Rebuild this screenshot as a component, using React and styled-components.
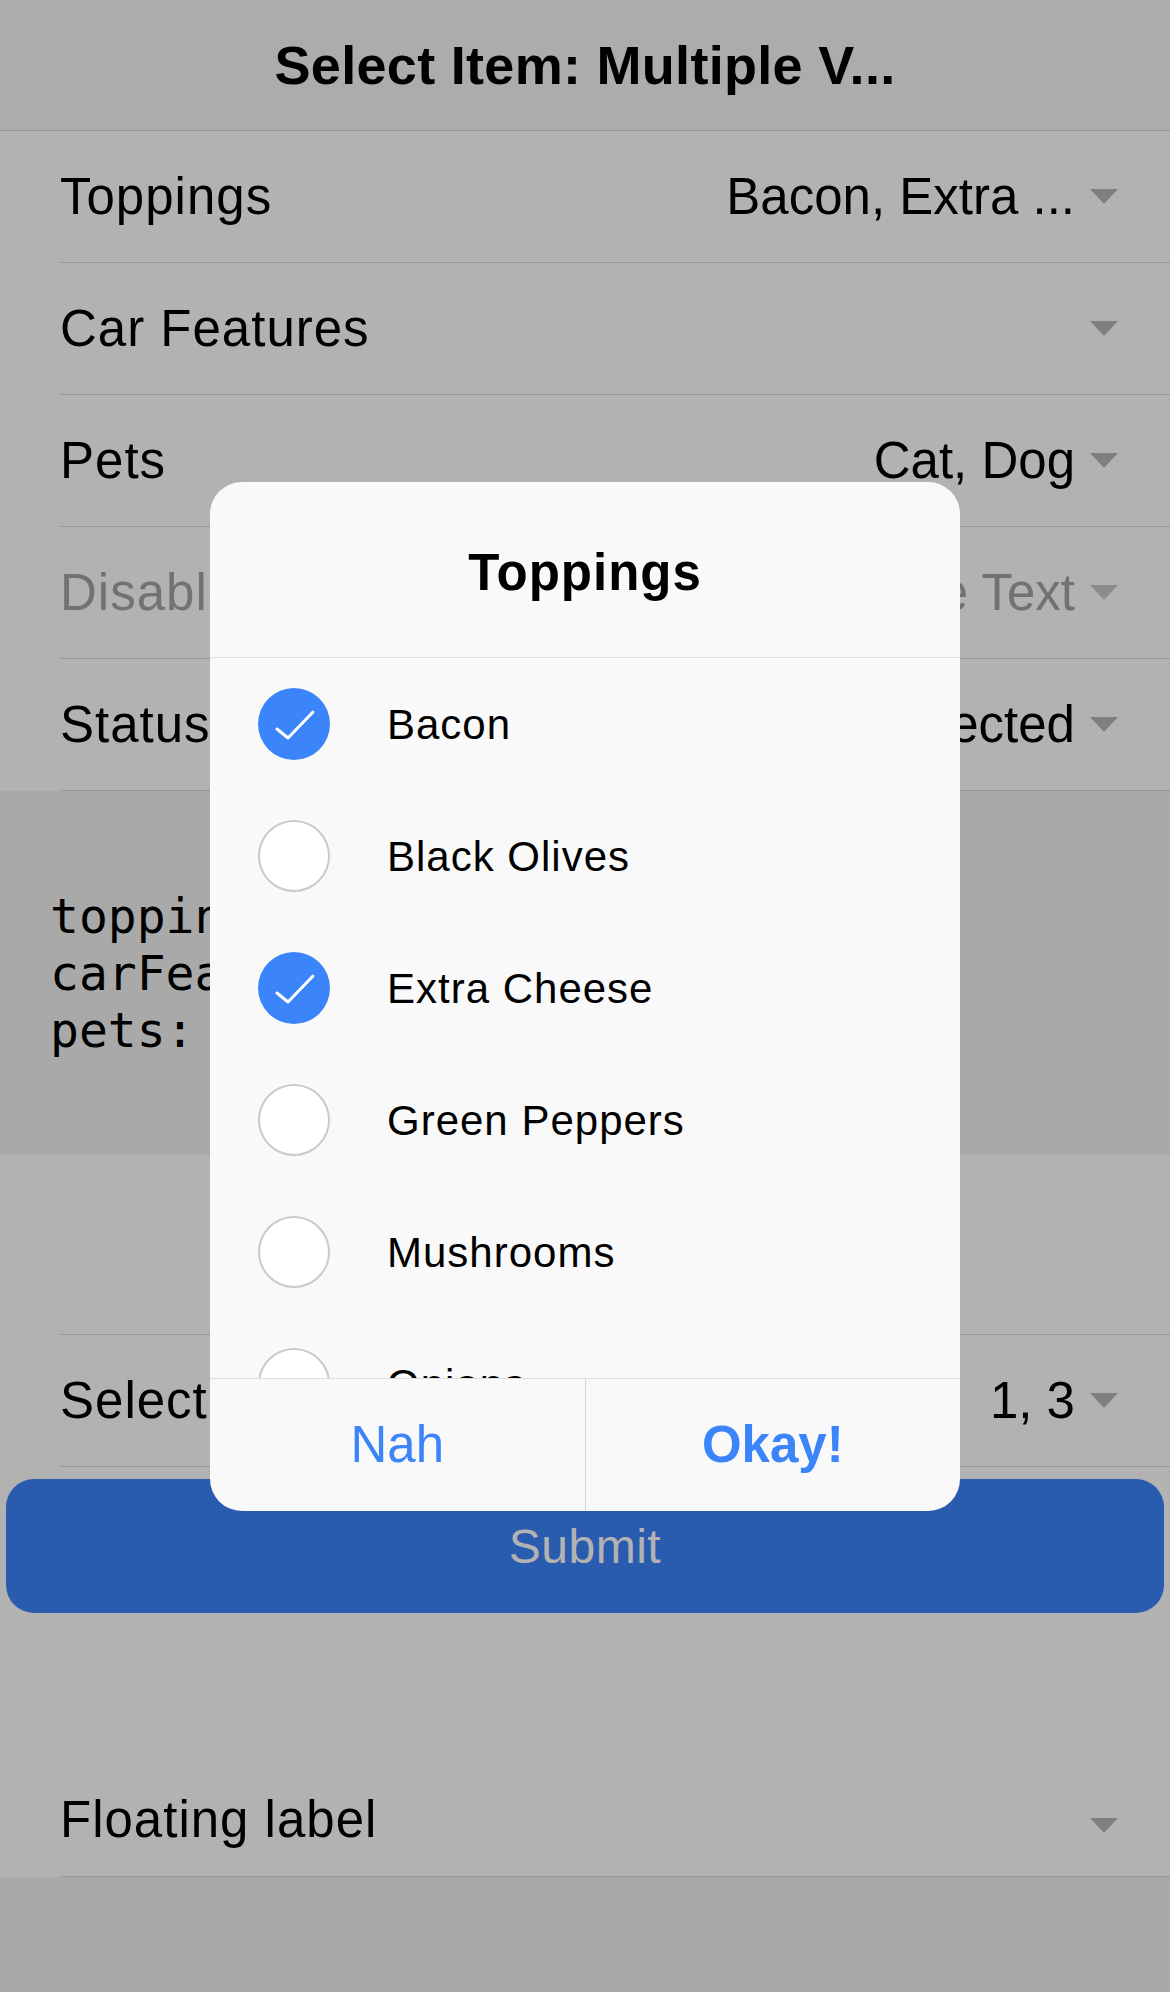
import React from "react";
import styled, { createGlobalStyle } from "styled-components";

const GlobalStyle = createGlobalStyle`
  html, body {
    margin: 0;
    padding: 0;
  }
  body {
    background: #f3f3f3;
    font-family: "Liberation Sans", Arial, sans-serif;
    color: #000;
  }
`;

const Screen = styled.div`
  position: relative;
  width: 1170px;
  height: 1992px;
  overflow: hidden;
  background: #f3f3f3;
`;

const NavBar = styled.header`
  height: 130px;
  background: #f6f6f6;
  border-bottom: 1px solid #d9d9d9;
  display: flex;
  align-items: center;
  justify-content: center;
`;

const NavTitle = styled.h1`
  margin: 0;
  font-size: 54px;
  font-weight: 700;
  letter-spacing: 0.3px;
`;

const Section = styled.section`
  background: #fff;
`;

const Row = styled.div`
  height: 131px;
  margin-left: 60px;
  padding-right: 52px;
  border-bottom: 1px solid #d9d9d9;
  display: flex;
  align-items: center;
  justify-content: space-between;
`;

const Label = styled.span`
  font-size: 51px;
  letter-spacing: 1px;
  color: ${props => (props.disabled ? "#a4a4a4" : "#000")};
  white-space: nowrap;
`;

const ValueBox = styled.div`
  display: flex;
  align-items: center;
  gap: 15px;
`;

const Value = styled.span`
  font-size: 51px;
  color: ${props => (props.disabled ? "#a4a4a4" : "#000")};
  white-space: nowrap;
`;

const Caret = styled.span`
  width: 0;
  height: 0;
  border-left: 14px solid transparent;
  border-right: 14px solid transparent;
  border-top: 15px solid ${props => (props.disabled ? "#cbcbcb" : "#b7b7b7")};
  margin-top: ${props => props.$drop || 0}px;
`;

const CodeBox = styled.pre`
  margin: 0;
  height: 364px;
  box-sizing: border-box;
  padding: 97px 50px 0;
  background: #f3f3f3;
  font-family: "DejaVu Sans Mono", "Liberation Mono", monospace;
  font-size: 48px;
  line-height: 57px;
  color: #000;
  overflow: hidden;
`;

const Spacer = styled.div`
  height: ${props => props.$h}px;
  margin-left: ${props => (props.$line ? 60 : 0)}px;
  border-bottom: ${props => (props.$line ? "1px solid #d9d9d9" : "none")};
`;

const SubmitButton = styled.button`
  display: block;
  width: calc(100% - 12px);
  height: 134px;
  margin: 12px 6px 0;
  border: none;
  border-radius: 28px;
  background: #3b84fa;
  color: #fff;
  font-family: inherit;
  font-size: 48px;
  letter-spacing: 0.5px;
`;

const FloatRow = styled(Row)`
  box-sizing: border-box;
  height: 264px;
  padding-top: 150px;
`;

const Overlay = styled.div`
  position: absolute;
  inset: 0;
  background: rgba(0, 0, 0, 0.3);
  display: flex;
  align-items: center;
  justify-content: center;
`;

const Dialog = styled.div`
  width: 750px;
  height: 1029px;
  border-radius: 32px;
  background: #f9f9f9;
  overflow: hidden;
  display: flex;
  flex-direction: column;
`;

const DialogHead = styled.div`
  height: 176px;
  flex-shrink: 0;
  box-sizing: border-box;
  padding-top: 6px;
  border-bottom: 1px solid #dedede;
  display: flex;
  align-items: center;
  justify-content: center;
  font-size: 51px;
  font-weight: 700;
  letter-spacing: 1px;
`;

const OptionList = styled.div`
  height: 720px;
  flex-shrink: 0;
  overflow: hidden;
`;

const Option = styled.div`
  height: 132px;
  display: flex;
  align-items: center;
  padding-left: 48px;
  gap: 57px;
`;

const Tick = styled.span`
  width: 72px;
  height: 72px;
  flex-shrink: 0;
  box-sizing: border-box;
  border-radius: 50%;
  background: ${props => (props.$on ? "#3b84fa" : "#fff")};
  border: ${props => (props.$on ? "none" : "2px solid #cacacd")};
  display: flex;
`;

const OptionText = styled.span`
  font-size: 42px;
  letter-spacing: 1px;
  padding-top: 2px;
`;

const DialogFoot = styled.div`
  height: 131px;
  flex-shrink: 0;
  border-top: 1px solid #dedede;
  display: flex;
`;

const FootButton = styled.button`
  flex: 1;
  border: none;
  background: transparent;
  font-family: inherit;
  font-size: 51px;
  color: #3b84fa;
  font-weight: ${props => (props.$strong ? 700 : 400)};
  & + & {
    border-left: 1px solid #d4d4d4;
  }
`;

const fields = [
  { label: "Toppings", value: "Bacon, Extra ..." },
  { label: "Car Features", value: "" },
  { label: "Pets", value: "Cat, Dog" },
  { label: "Disabled", value: "Some Text", disabled: true },
  { label: "Status", value: "None Selected" },
];

const toppings = [
  { name: "Bacon", on: true },
  { name: "Black Olives" },
  { name: "Extra Cheese", on: true },
  { name: "Green Peppers" },
  { name: "Mushrooms" },
  { name: "Onions" },
  { name: "Pepperoni" },
];

const ValueRow = ({ label, value, disabled }) => (
  <Row>
    <Label disabled={disabled}>{label}</Label>
    <ValueBox>
      {value && <Value disabled={disabled}>{value}</Value>}
      <Caret disabled={disabled} />
    </ValueBox>
  </Row>
);

const Check = ({ on }) => (
  <Tick $on={on}>
    {on && (
      <svg width="72" height="72" viewBox="0 0 72 72">
        <polyline
          points="19,41 30,50 55,24"
          fill="none"
          stroke="#fff"
          strokeWidth="3"
          strokeLinecap="round"
          strokeLinejoin="round"
        />
      </svg>
    )}
  </Tick>
);

const App = () => (
  <Screen>
    <GlobalStyle />
    <NavBar>
      <NavTitle>Select Item: Multiple V...</NavTitle>
    </NavBar>
    <Section>
      {fields.map(f => (
        <ValueRow key={f.label} {...f} />
      ))}
    </Section>
    <CodeBox>
      {"toppings: bacon, extraCheese\ncarFeatures: \npets: cat, dog"}
    </CodeBox>
    <Section>
      <Spacer $h={179} $line />
      <ValueRow label="Select Numbers" value="1, 3" />
      <SubmitButton>Submit</SubmitButton>
      <FloatRow>
        <Label>Floating label</Label>
        <Caret $drop={12} />
      </FloatRow>
    </Section>
    <Overlay>
      <Dialog>
        <DialogHead>Toppings</DialogHead>
        <OptionList>
          {toppings.map(t => (
            <Option key={t.name}>
              <Check on={t.on} />
              <OptionText>{t.name}</OptionText>
            </Option>
          ))}
        </OptionList>
        <DialogFoot>
          <FootButton>Nah</FootButton>
          <FootButton $strong>Okay!</FootButton>
        </DialogFoot>
      </Dialog>
    </Overlay>
  </Screen>
);

export default App;
